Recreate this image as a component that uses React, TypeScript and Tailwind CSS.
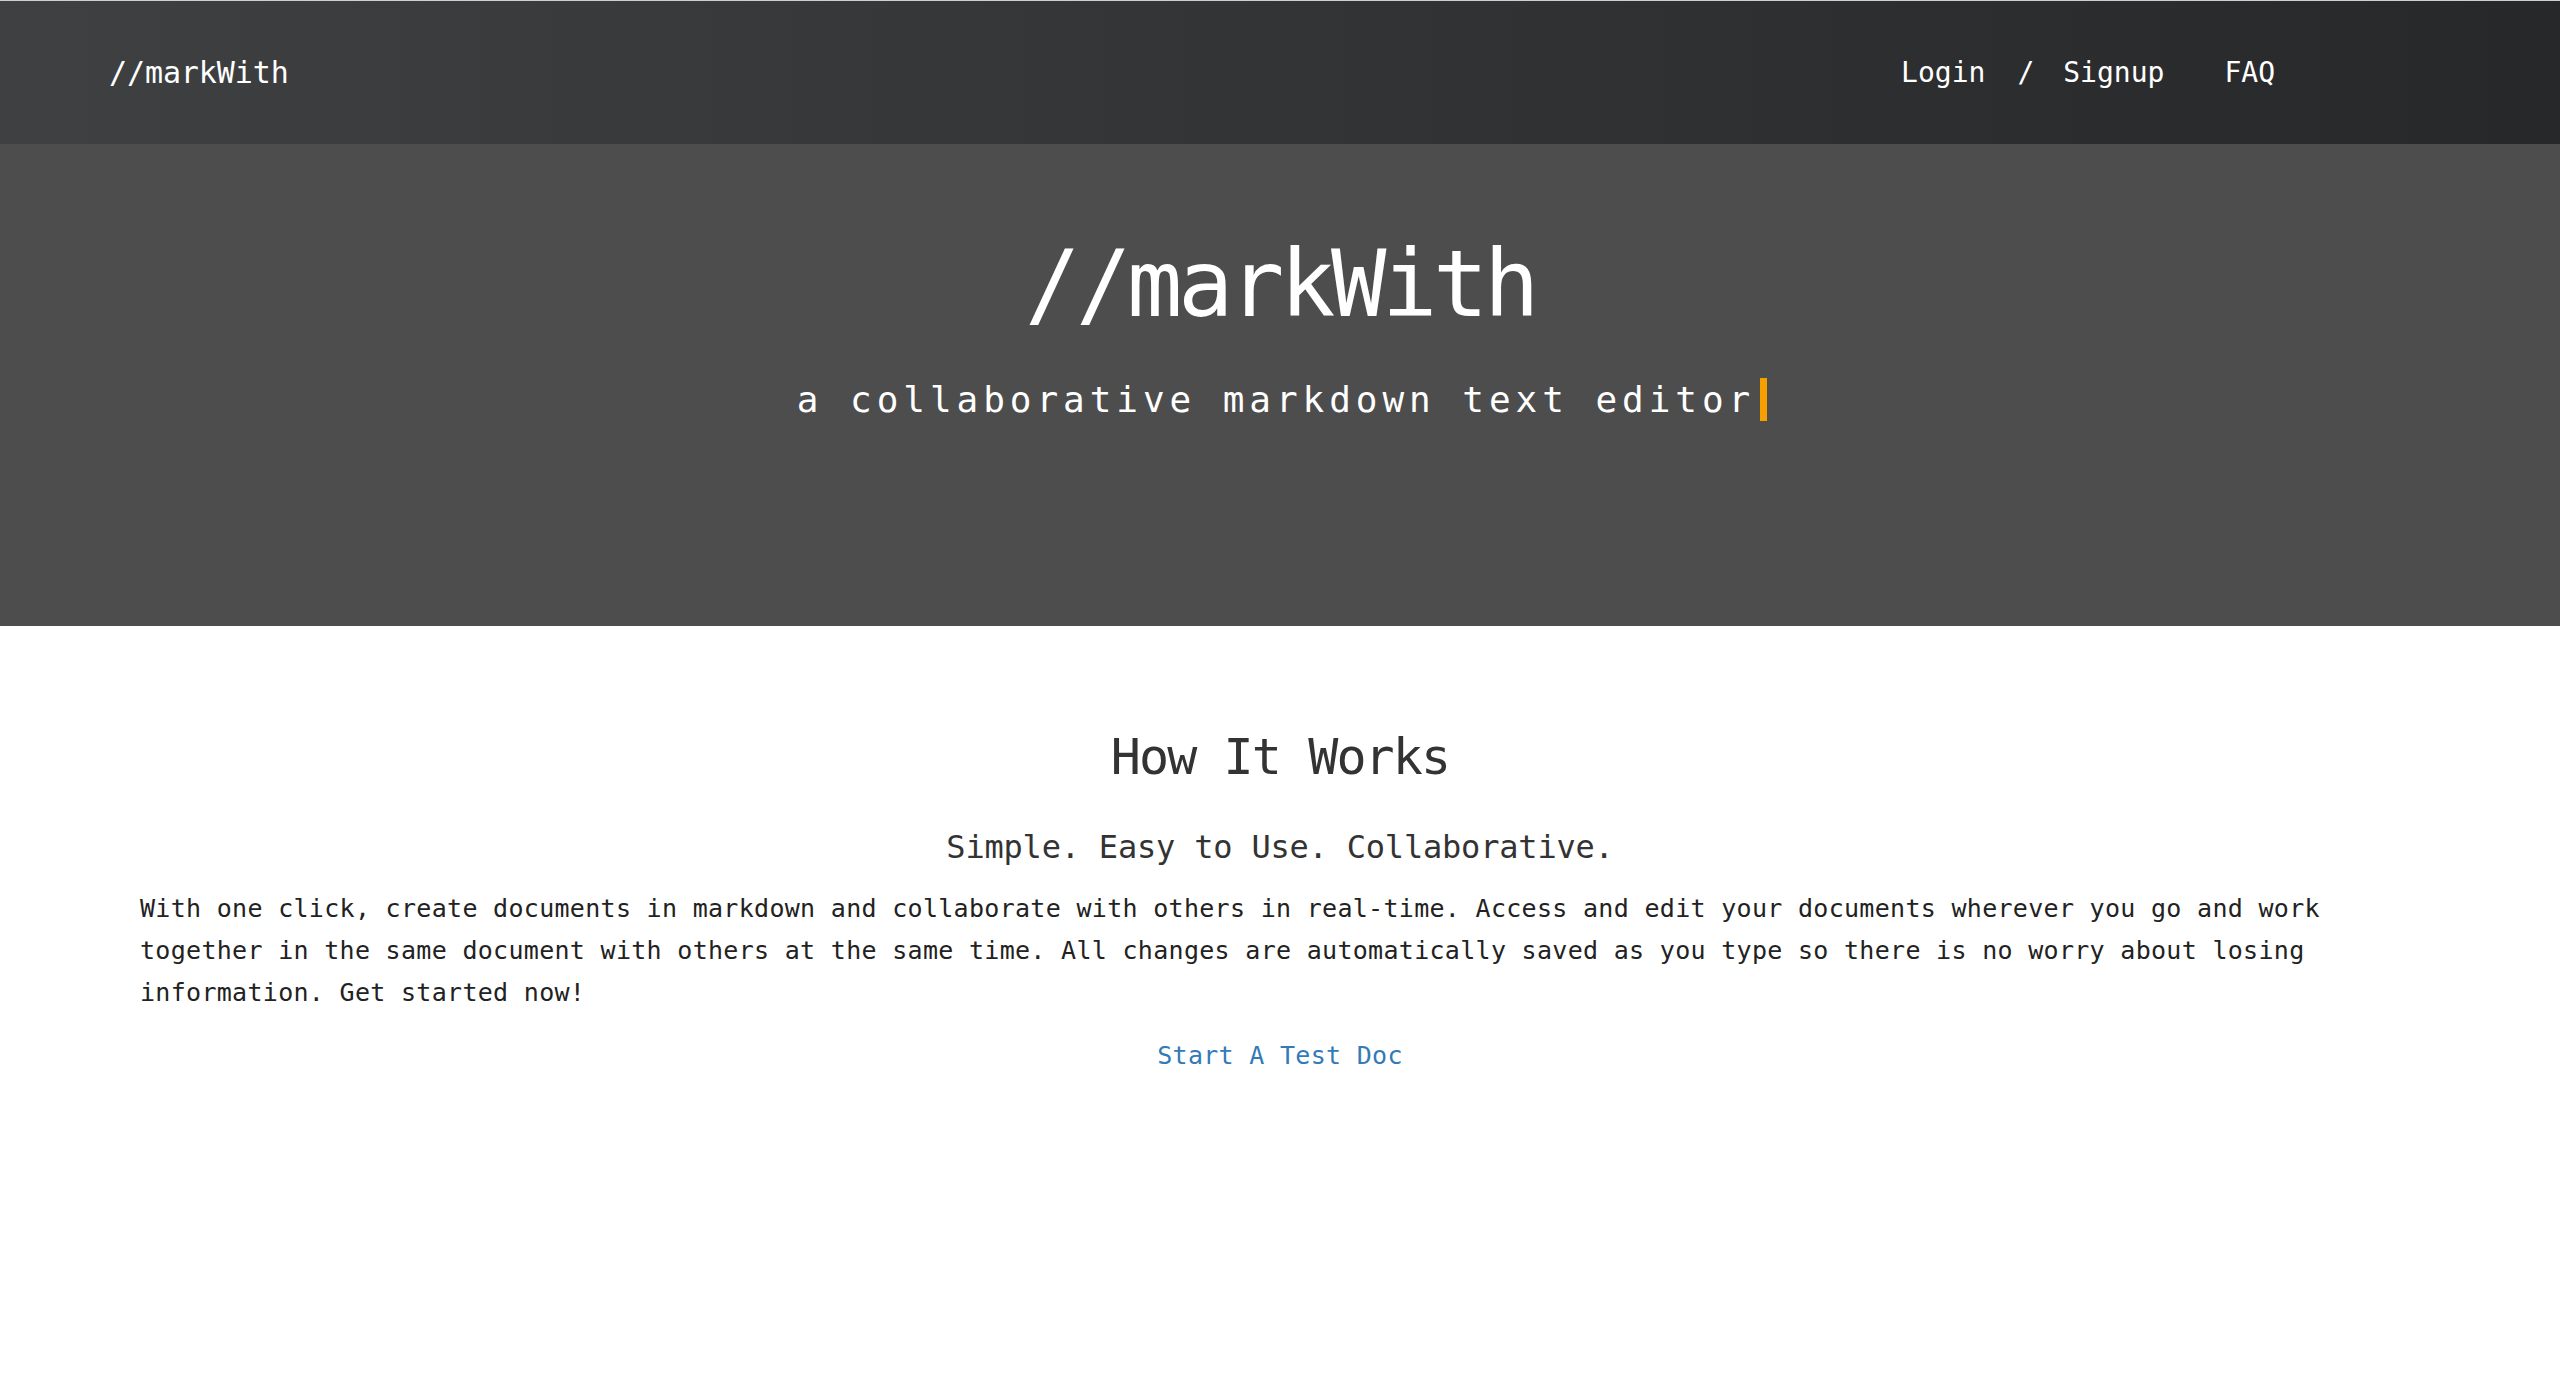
import React from 'react';

const App: React.FC = () => {
  return (
    <div className="min-h-screen bg-white font-['DejaVu_Sans_Mono','Liberation_Mono',monospace]">
      <div className="h-px bg-[#cfcfcf]" />

      {/* top navbar */}
      <nav className="h-[143px] flex items-center pl-[109px] pr-[285px] bg-gradient-to-r from-[#3f4042] to-[#27282a] text-white">
        <a className="text-[30px] leading-none tracking-[-0.1px]">//markWith</a>
        <div className="ml-auto flex items-center text-[28px] leading-none">
          <a>Login</a>
          <span className="ml-[32px] mr-[29px]">/</span>
          <a>Signup</a>
          <a className="ml-[60px]">FAQ</a>
        </div>
      </nav>

      {/* hero */}
      <header className="h-[482px] bg-[#4d4d4d] flex flex-col items-center pt-[95px] text-white">
        <h1 className="text-[92px] leading-none tracking-[-4.4px]">//markWith</h1>
        <p className="mt-[47px] text-[36px] leading-none tracking-[4.95px] flex items-center">
          a collaborative markdown text editor
          <span className="ml-[5px] mr-[-4px] inline-block w-[7px] h-[43px] bg-[#f5a000]" />
        </p>
      </header>

      {/* how it works */}
      <section className="flex flex-col items-center px-[140px] text-[#333]">
        <h2 className="mt-[106px] text-[50px] leading-none tracking-[-1.9px]">How It Works</h2>
        <h3 className="mt-[49px] text-[32px] leading-none tracking-[-0.2px]">Simple. Easy to Use. Collaborative.</h3>
        <p className="mt-[25px] w-full text-[25px] leading-[42px] tracking-[0.3px] text-[#222]">
          With one click, create documents in markdown and collaborate with others in real-time. Access and edit your
          documents wherever you go and work together in the same document with others at the same time. All changes are
          automatically saved as you type so there is no worry about losing information. Get started now!
        </p>
        <a className="mt-[29px] text-[25px] leading-none tracking-[0.3px] text-[#337ab7]">Start A Test Doc</a>
      </section>
    </div>
  );
};

export default App;
